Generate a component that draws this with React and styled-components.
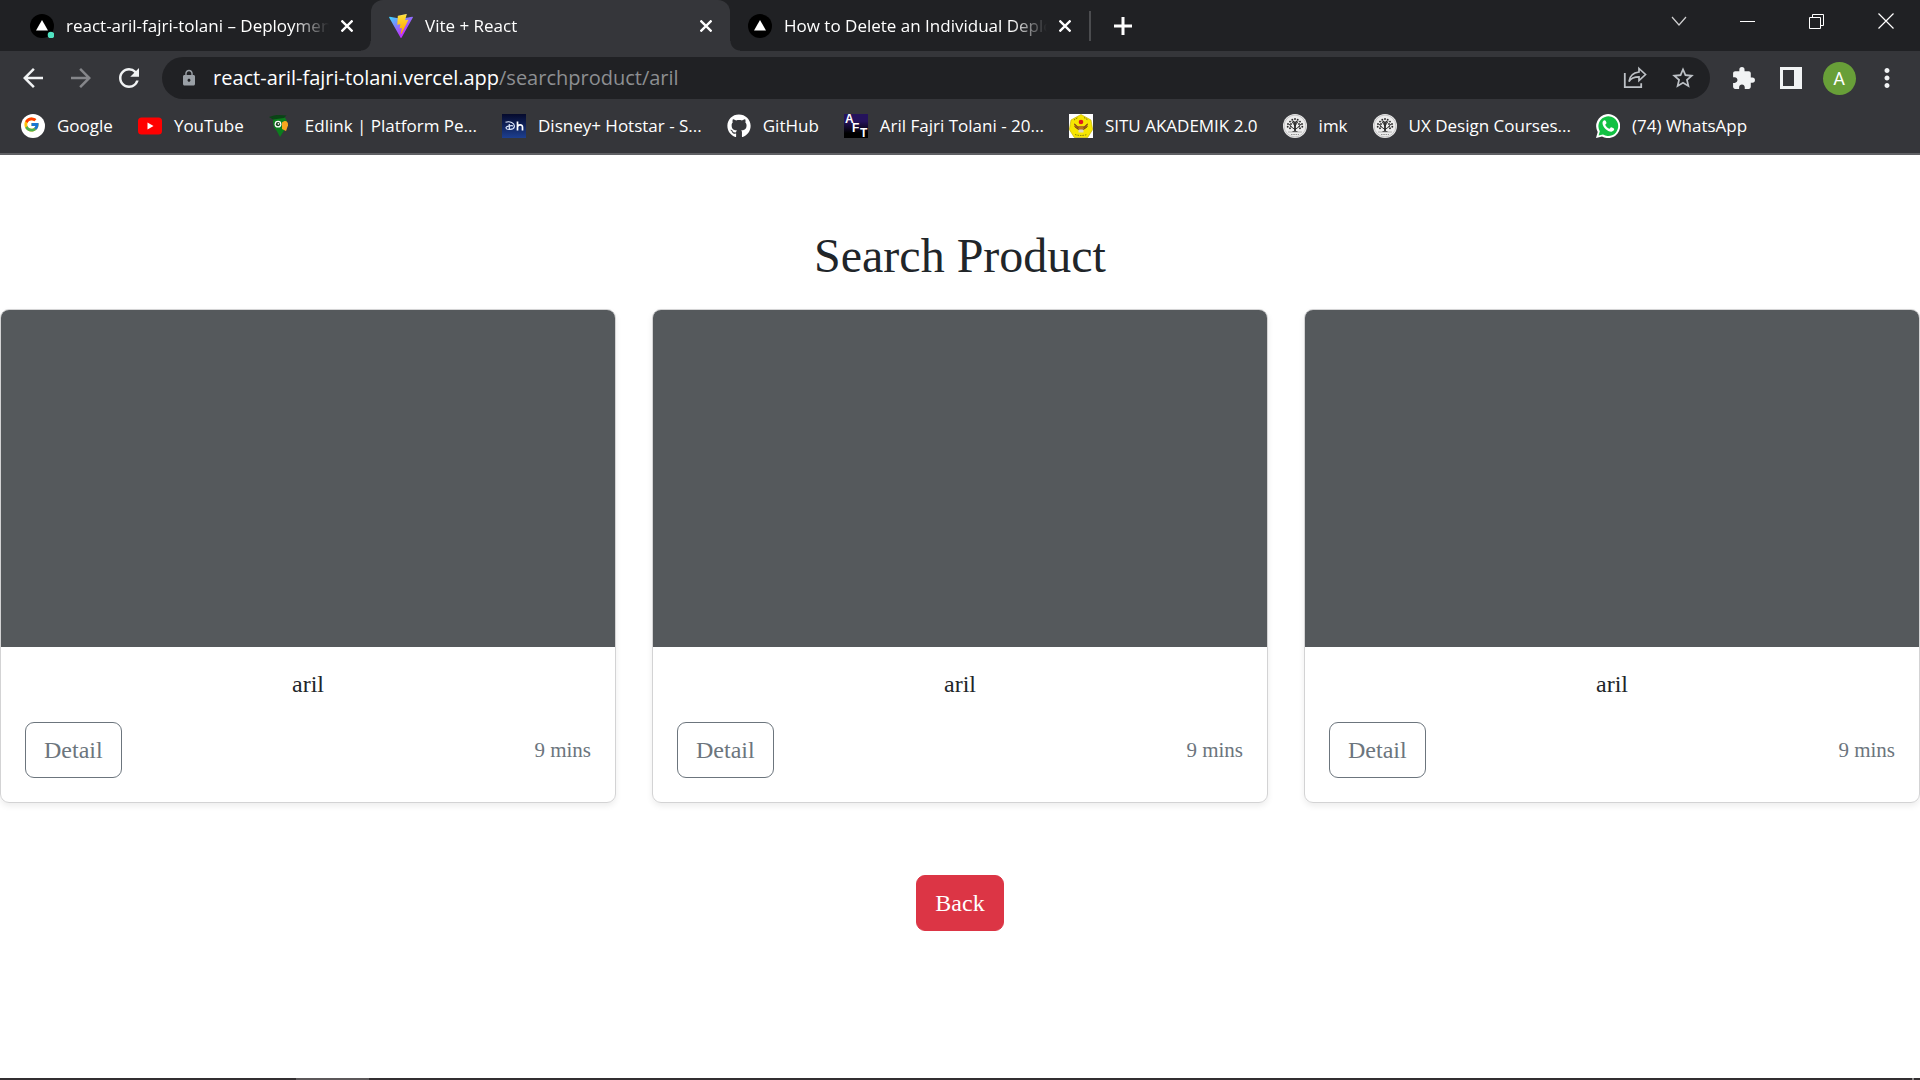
import React from "react";
import styled, { createGlobalStyle } from "styled-components";
import {
  MdArrowBack,
  MdArrowForward,
  MdRefresh,
  MdLock,
  MdStarBorder,
  MdExtension,
  MdMoreVert,
} from "react-icons/md";
import { FcGoogle } from "react-icons/fc";
import { FaGithub } from "react-icons/fa";

const uiFont = '"Open Sans", "Noto Sans", sans-serif';
const pageFont = '"Liberation Serif", serif';

const GlobalStyle = createGlobalStyle`
  *, *::before, *::after { box-sizing: border-box; }
  body { margin: 0; background: #fff; }
  button, input { font: inherit; }
`;

const Window = styled.div`
  min-height: 100vh;
  display: flex;
  flex-direction: column;
`;

/* ---------- browser frame ---------- */

const Chrome = styled.header`
  background: #35363a;
  border-bottom: 2px solid #5f6064;
  color: #fff;
  font-family: ${uiFont};
  font-size: 17px;
`;

const TabStrip = styled.div`
  display: flex;
  height: 51px;
  padding-left: 12px;
  background: #202124;
`;

const Tab = styled.div`
  position: relative;
  display: flex;
  align-items: center;
  gap: 12px;
  width: 359px;
  padding: 0 18px;
  border-radius: 12px 12px 0 0;
  background: ${(p) => (p.$active ? "#35363a" : "transparent")};

  &::before,
  &::after {
    content: "";
    display: ${(p) => (p.$active ? "block" : "none")};
    position: absolute;
    bottom: 0;
    width: 10px;
    height: 10px;
  }
  &::before {
    right: 100%;
    background: radial-gradient(circle at 0 0, transparent 9px, #35363a 10px);
  }
  &::after {
    left: 100%;
    background: radial-gradient(circle at 100% 0, transparent 9px, #35363a 10px);
  }
`;

const TabTitle = styled.span`
  flex: 1;
  min-width: 0;
  overflow: hidden;
  white-space: nowrap;
  line-height: 24px;
  mask-image: linear-gradient(to left, transparent, #000 36px);
`;

const IconButton = styled.button`
  display: flex;
  align-items: center;
  justify-content: center;
  flex: none;
  width: ${(p) => p.$width || "48px"};
  height: ${(p) => p.$height || "42px"};
  padding: 0;
  border: 0;
  background: none;
  color: ${(p) => p.$color || "#f1f3f4"};
`;

const Divider = styled.span`
  align-self: center;
  width: 2px;
  height: 30px;
  background: #4b4c4f;
`;

const WindowControls = styled.div`
  display: flex;
  margin-left: auto;
`;

const Toolbar = styled.div`
  display: flex;
  align-items: center;
  padding: 6px 9px 0;
`;

const AddressBar = styled.div`
  flex: 1;
  display: flex;
  align-items: center;
  height: 42px;
  margin: 0 9px;
  padding: 0 3px 0 18px;
  border-radius: 21px;
  background: #202124;
`;

const Address = styled.label`
  flex: 1;
  display: flex;
  align-items: center;
  margin-left: 15px;
  font-size: 20px;
  line-height: 30px;
`;

const AddressPath = styled.input`
  flex: 1;
  min-width: 0;
  padding: 0;
  border: 0;
  outline: 0;
  background: none;
  color: #8d8f92;
`;

const Avatar = styled.span`
  width: 33px;
  height: 33px;
  border-radius: 50%;
  background: #689f38;
  color: #fff;
  font-family: Roboto, sans-serif;
  font-size: 18px;
  line-height: 33px;
  text-align: center;
`;

const Bookmarks = styled.nav`
  display: flex;
  align-items: center;
  gap: 25px;
  height: 54px;
  padding: 0 21px;
`;

const Bookmark = styled.a`
  display: flex;
  align-items: center;
  gap: 12px;
  color: #fff;
  line-height: 24px;
  text-decoration: none;
  white-space: nowrap;
`;

/* ---------- page ---------- */

const Page = styled.main`
  flex: 1;
  display: flex;
  flex-direction: column;
  align-items: center;
  padding-top: 72px;
  color: #212529;
  font-family: ${pageFont};
  font-size: 24px;
`;

const Title = styled.h1`
  margin: 0 0 24px;
  font-size: 48px;
  font-weight: 400;
  line-height: 58px;
`;

const Products = styled.section`
  align-self: stretch;
  display: grid;
  grid-template-columns: repeat(3, 1fr);
  gap: 36px;
  margin-bottom: 72px;
`;

const Card = styled.article`
  border: 1px solid #d3d3d4;
  border-radius: 9px;
  overflow: hidden;
  box-shadow: 0 3px 6px rgba(0, 0, 0, 0.075);
`;

const Thumbnail = styled.div`
  height: 337px;
  background: #55595c;
`;

const CardBody = styled.div`
  padding: 24px;
`;

const CardName = styled.h2`
  margin: 0 0 24px;
  font-size: 24px;
  font-weight: 400;
  line-height: 27px;
  text-align: center;
`;

const CardFooter = styled.div`
  display: flex;
  align-items: center;
  justify-content: space-between;
`;

const Button = styled.button`
  padding: 9px 18px;
  border: 1px solid ${(p) => (p.$danger ? "#dc3545" : "#6c757d")};
  border-radius: 9px;
  background: ${(p) => (p.$danger ? "#dc3545" : "#fff")};
  color: ${(p) => (p.$danger ? "#fff" : "#6c757d")};
  line-height: 36px;
`;

const Duration = styled.small`
  color: #6c757d;
  font-size: 21px;
`;

const Taskbar = styled.footer`
  display: flex;
  justify-content: space-between;
  height: 2px;
  padding: 0 6px 0 296px;
  background: #332f31;
`;

const TaskbarItem = styled.div`
  width: 73px;
  background: #5c585a;
`;

const ShowDesktop = styled.div`
  width: 2px;
  background: #8a8788;
`;

/* ---------- drawings ---------- */

const Svg = ({ size = 24, children, ...rest }) => (
  <svg width={size} height={size} viewBox={`0 0 ${size} ${size}`} fill="none" aria-hidden="true" {...rest}>
    {children}
  </svg>
);

const VercelIcon = ({ live }) => (
  <Svg>
    <circle cx="12" cy="12" r="12" fill="#000" />
    <path d="M12 6l6 10.500H6z" fill="#fff" />
    {live && <circle cx="21" cy="21" r="3.300" fill="#50e3c2" />}
  </Svg>
);

const ViteIcon = () => (
  <Svg viewBox="0 0 256 257">
    <defs>
      <linearGradient id="viteBlue" x1="-.828%" x2="57.636%" y1="7.652%" y2="78.411%">
        <stop offset="0%" stopColor="#41D1FF" />
        <stop offset="100%" stopColor="#BD34FE" />
      </linearGradient>
      <linearGradient id="viteBolt" x1="43.376%" x2="50.316%" y1="2.242%" y2="89.030%">
        <stop offset="0%" stopColor="#FFEA83" />
        <stop offset="8.333%" stopColor="#FFDD35" />
        <stop offset="100%" stopColor="#FFA800" />
      </linearGradient>
    </defs>
    <path fill="url(#viteBlue)" d="M255.153 37.938L134.897 252.976c-2.483 4.440-8.862 4.466-11.382.048L.875 37.958c-2.746-4.814 1.371-10.646 6.827-9.670l120.385 21.517a6.537 6.537 0 0 0 2.322-.004l117.867-21.483c5.438-.991 9.574 4.796 6.877 9.620Z" />
    <path fill="url(#viteBolt)" d="M185.432.063L96.440 17.501a3.268 3.268 0 0 0-2.634 3.014l-5.474 92.456a3.268 3.268 0 0 0 3.997 3.378l24.777-5.718c2.318-.535 4.413 1.507 3.936 3.838l-7.361 36.047c-.495 2.426 1.782 4.500 4.151 3.780l15.304-4.649c2.372-.720 4.652 1.360 4.150 3.788l-11.698 56.621c-.732 3.542 3.979 5.473 5.943 2.437l1.313-2.028l72.516-144.720c1.215-2.423-.880-5.186-3.540-4.672l-25.505 4.922c-2.396.462-4.435-1.770-3.759-4.114l16.646-57.705c.677-2.350-1.370-4.583-3.769-4.113Z" />
  </Svg>
);

const TabClose = () => (
  <Svg size={12}>
    <path d="M.5.5l11 11M11.500.5l-11 11" stroke="#fff" strokeWidth="2.300" />
  </Svg>
);

const PlusIcon = () => (
  <Svg size={18}>
    <path d="M9 0v18M0 9h18" stroke="#fff" strokeWidth="3" />
  </Svg>
);

const ChevronIcon = () => (
  <Svg size={16}>
    <path d="M1 4l7 8 7-8" stroke="#d0d0d1" strokeWidth="1.200" />
  </Svg>
);

const MinimizeIcon = () => (
  <Svg size={15}>
    <path d="M0 7.500h15" stroke="#fff" />
  </Svg>
);

const RestoreIcon = () => (
  <Svg size={15}>
    <path d="M.5 3.500h11v11H.5zM3.500 3.500v-3h11v11h-3" stroke="#fff" />
  </Svg>
);

const WindowCloseIcon = () => (
  <Svg size={16}>
    <path d="M.5.5l15 15M15.500.5l-15 15" stroke="#fff" strokeWidth="1.200" />
  </Svg>
);

const ShareIcon = () => (
  <Svg>
    <path d="M1.800 7v14.200h16.400v-4" stroke="#bdc1c6" strokeWidth="1.800" />
    <path d="M16 2.500l6.500 6-6.500 6v-3.600c-5 0-8 1.300-10 4.600.6-5 3.800-8.800 10-9.500z" stroke="#bdc1c6" strokeWidth="1.700" />
  </Svg>
);

const SidePanelIcon = () => (
  <Svg size={22}>
    <path d="M0 0h22v22H0zM3 3v16h11V3z" fill="#f1f3f4" fillRule="evenodd" />
  </Svg>
);

const GoogleIcon = () => (
  <Svg>
    <circle cx="12" cy="12" r="12" fill="#fff" />
    <FcGoogle x="2" y="2" width="20" height="20" />
  </Svg>
);

const YouTubeIcon = () => (
  <Svg>
    <rect y="3.500" width="24" height="17" rx="3.500" fill="#f00" />
    <path d="M9.500 8.500v7l6-3.500z" fill="#fff" />
  </Svg>
);

const EdlinkIcon = () => (
  <Svg>
    <path d="M4.500 3.500C8 1 12 1 15 3c3.500 2.500 3.500 6.500 2 10.500L11 23l-3.500-6.500C4 13.500 3.500 8 4.500 3.500z" fill="#0c7d1d" />
    <path d="M0 3c5-2.500 11-2.500 17.500-1.500L15 4 4 5.500z" fill="#0a4416" />
    <path d="M13 8.500c3-3 6.500-1.500 6 3l-2 5.500-4-2z" fill="#f9a620" />
    <circle cx="9" cy="10.200" r="3.400" fill="#fff" />
    <circle cx="9" cy="10.200" r="2.100" fill="#143a1a" />
    <circle cx="9.400" cy="9.800" r=".9" fill="#fff" />
  </Svg>
);

const HotstarIcon = () => (
  <Svg>
    <defs>
      <linearGradient id="hotstar" x1="0" y1="0" x2="0" y2="1">
        <stop stopColor="#050a2c" />
        <stop offset="1" stopColor="#1d3f8f" />
      </linearGradient>
    </defs>
    <rect width="24" height="24" fill="url(#hotstar)" />
    <path d="M3.500 8.300c4-1.500 9.500.5 8.800 4.500-.5 3-7.800 3.600-8.300 1.200-.3-1.700 4-2.600 7-2.200M7.300 10v6" stroke="#dfe8fb" strokeWidth="1.200" />
    <path d="M15.500 7.500v9m0-3.500c.6-2.600 5-3 5 .3v3.200" stroke="#fff" strokeWidth="1.700" />
  </Svg>
);

const AftIcon = () => (
  <Svg fontFamily="Liberation Sans, sans-serif" fontWeight="700" fontSize="12">
    <defs>
      <linearGradient id="aft" x1="0" y1="0" x2="0" y2="1">
        <stop offset=".3" stopColor="#25135c" />
        <stop offset=".8" stopColor="#000" />
      </linearGradient>
    </defs>
    <rect width="24" height="24" fill="url(#aft)" />
    <text x="1" y="9" fill="#fff">A</text>
    <text x="8" y="18" fill="#fff">F</text>
    <text x="16" y="23" fill="#fff">T</text>
  </Svg>
);

const SituIcon = () => (
  <Svg>
    <rect width="24" height="24" fill="#fff" />
    <path d="M12 .5l10 5.500 1.700 9.500-5 8H5.300l-5-8L2 6z" fill="#f6e500" stroke="#b9a800" strokeWidth=".6" />
    <path d="M5 9c0 4 2.500 6 7 8 4.500-2 7-4 7-8l-3.500 3h-7z" fill="#b9741a" />
    <path d="M5.500 12.500l5.500 4M18.500 12.500l-5.500 4M5.500 10l4 4M18.500 10l-4 4" stroke="#74400f" />
    <circle cx="12" cy="8" r="2.300" fill="#e3191c" />
    <path d="M9.500 15.500h5v3h-5z" fill="#ddd6c2" />
    <path d="M6 20.500q6 2 12 0M5 6l4-2.500M15 3.500L19 6" stroke="#6d6a10" strokeWidth=".9" strokeDasharray="1.500 1" />
  </Svg>
);

const TreeIcon = () => (
  <Svg>
    <circle cx="12" cy="12" r="12" fill="#ededed" />
    <circle cx="12" cy="12" r="10.900" stroke="#aaa" strokeWidth=".6" />
    <path d="M12 17.500V9" stroke="#111" strokeWidth="1.600" />
    <path d="M12 15.500L7 12M12 15.500l5-3.500M12 12L9 7.500M12 12l3-4.500M8.500 13L6 10M15.500 13l2.500-3M9.500 17.500h5" stroke="#222" strokeWidth=".9" />
    <g fill="#2a2a2a">
      {[[12, 5], [9.300, 5.800], [14.700, 5.800], [7, 7.600], [10.500, 7.800], [13.500, 7.800], [17, 7.600], [5, 10], [8, 10], [16, 10], [19, 10], [4.700, 12.700], [19.300, 12.700], [7, 14.300], [17, 14.300], [12, 8.500]].map(([x, y]) => (
        <circle key={`${x}-${y}`} cx={x} cy={y} r=".95" />
      ))}
    </g>
    <path d="M5 18h14" stroke="#999" strokeWidth=".7" />
    <path d="M8 20.500h8" stroke="#888" strokeWidth=".9" strokeDasharray="1.500 .8" />
  </Svg>
);

const WhatsAppIcon = () => (
  <Svg>
    <path d="M0 24l1.700-6A12 12 0 1 1 6 22.400z" fill="#fff" />
    <path d="M2.600 21.500l1.200-4.300A9.900 9.900 0 1 1 7 20.500z" fill="#12c143" />
    <path d="M8.500 6.300c-1 .1-2.100 1.300-2 3 .2 4 5.200 8.600 8.900 8.400 1.500-.1 2.800-1.200 2.800-2.600 0-.7-2.500-2-3.200-1.800-.6.200-.9 1.500-1.500 1.400-1.500-.2-4-2.600-4.200-4 0-.6 1.200-1 1.200-1.700 0-.8-1-2.800-2-2.700z" fill="#fff" />
  </Svg>
);

const tabs = [
  { title: "react-aril-fajri-tolani – Deployments", icon: <VercelIcon live /> },
  { title: "Vite + React", icon: <ViteIcon />, active: true },
  { title: "How to Delete an Individual Deployment", icon: <VercelIcon /> },
];

const bookmarks = [
  { label: "Google", icon: <GoogleIcon /> },
  { label: "YouTube", icon: <YouTubeIcon /> },
  { label: "Edlink | Platform Pe...", icon: <EdlinkIcon /> },
  { label: "Disney+ Hotstar - S...", icon: <HotstarIcon /> },
  { label: "GitHub", icon: <FaGithub size={24} /> },
  { label: "Aril Fajri Tolani - 20...", icon: <AftIcon /> },
  { label: "SITU AKADEMIK 2.0", icon: <SituIcon /> },
  { label: "imk", icon: <TreeIcon /> },
  { label: "UX Design Courses...", icon: <TreeIcon /> },
  { label: "(74) WhatsApp", icon: <WhatsAppIcon /> },
];

const products = [
  { id: 1, name: "aril", duration: "9 mins" },
  { id: 2, name: "aril", duration: "9 mins" },
  { id: 3, name: "aril", duration: "9 mins" },
];

export default function App() {
  return (
    <Window>
      <GlobalStyle />
      <Chrome>
        <TabStrip>
          {tabs.map((tab) => (
            <Tab key={tab.title} $active={tab.active}>
              {tab.icon}
              <TabTitle>{tab.title}</TabTitle>
              <IconButton $width="12px" aria-label="Close tab">
                <TabClose />
              </IconButton>
            </Tab>
          ))}
          <Divider />
          <IconButton $width="64px" $height="51px" aria-label="New tab">
            <PlusIcon />
          </IconButton>
          <WindowControls>
            <IconButton $width="69px" aria-label="Search tabs"><ChevronIcon /></IconButton>
            <IconButton $width="69px" aria-label="Minimize"><MinimizeIcon /></IconButton>
            <IconButton $width="69px" aria-label="Restore"><RestoreIcon /></IconButton>
            <IconButton $width="69px" aria-label="Close window"><WindowCloseIcon /></IconButton>
          </WindowControls>
        </TabStrip>
        <Toolbar>
          <IconButton aria-label="Back"><MdArrowBack size={30} /></IconButton>
          <IconButton $color="#85868a" aria-label="Forward"><MdArrowForward size={30} /></IconButton>
          <IconButton aria-label="Reload"><MdRefresh size={30} /></IconButton>
          <AddressBar>
            <MdLock size={18} color="#9aa0a6" />
            <Address>
              <span>react-aril-fajri-tolani.vercel.app</span>
              <AddressPath defaultValue="/searchproduct/aril" />
            </Address>
            <IconButton aria-label="Share"><ShareIcon /></IconButton>
            <IconButton $color="#bdc1c6" aria-label="Bookmark this tab"><MdStarBorder size={26} /></IconButton>
          </AddressBar>
          <IconButton aria-label="Extensions"><MdExtension size={25} /></IconButton>
          <IconButton aria-label="Side panel"><SidePanelIcon /></IconButton>
          <IconButton aria-label="Profile"><Avatar>A</Avatar></IconButton>
          <IconButton aria-label="Menu"><MdMoreVert size={30} /></IconButton>
        </Toolbar>
        <Bookmarks>
          {bookmarks.map((b) => (
            <Bookmark key={b.label} href="#">
              {b.icon}
              {b.label}
            </Bookmark>
          ))}
        </Bookmarks>
      </Chrome>
      <Page>
        <Title>Search Product</Title>
        <Products>
          {products.map((p) => (
            <Card key={p.id}>
              <Thumbnail />
              <CardBody>
                <CardName>{p.name}</CardName>
                <CardFooter>
                  <Button>Detail</Button>
                  <Duration>{p.duration}</Duration>
                </CardFooter>
              </CardBody>
            </Card>
          ))}
        </Products>
        <Button $danger>Back</Button>
      </Page>
      <Taskbar>
        <TaskbarItem />
        <ShowDesktop />
      </Taskbar>
    </Window>
  );
}
